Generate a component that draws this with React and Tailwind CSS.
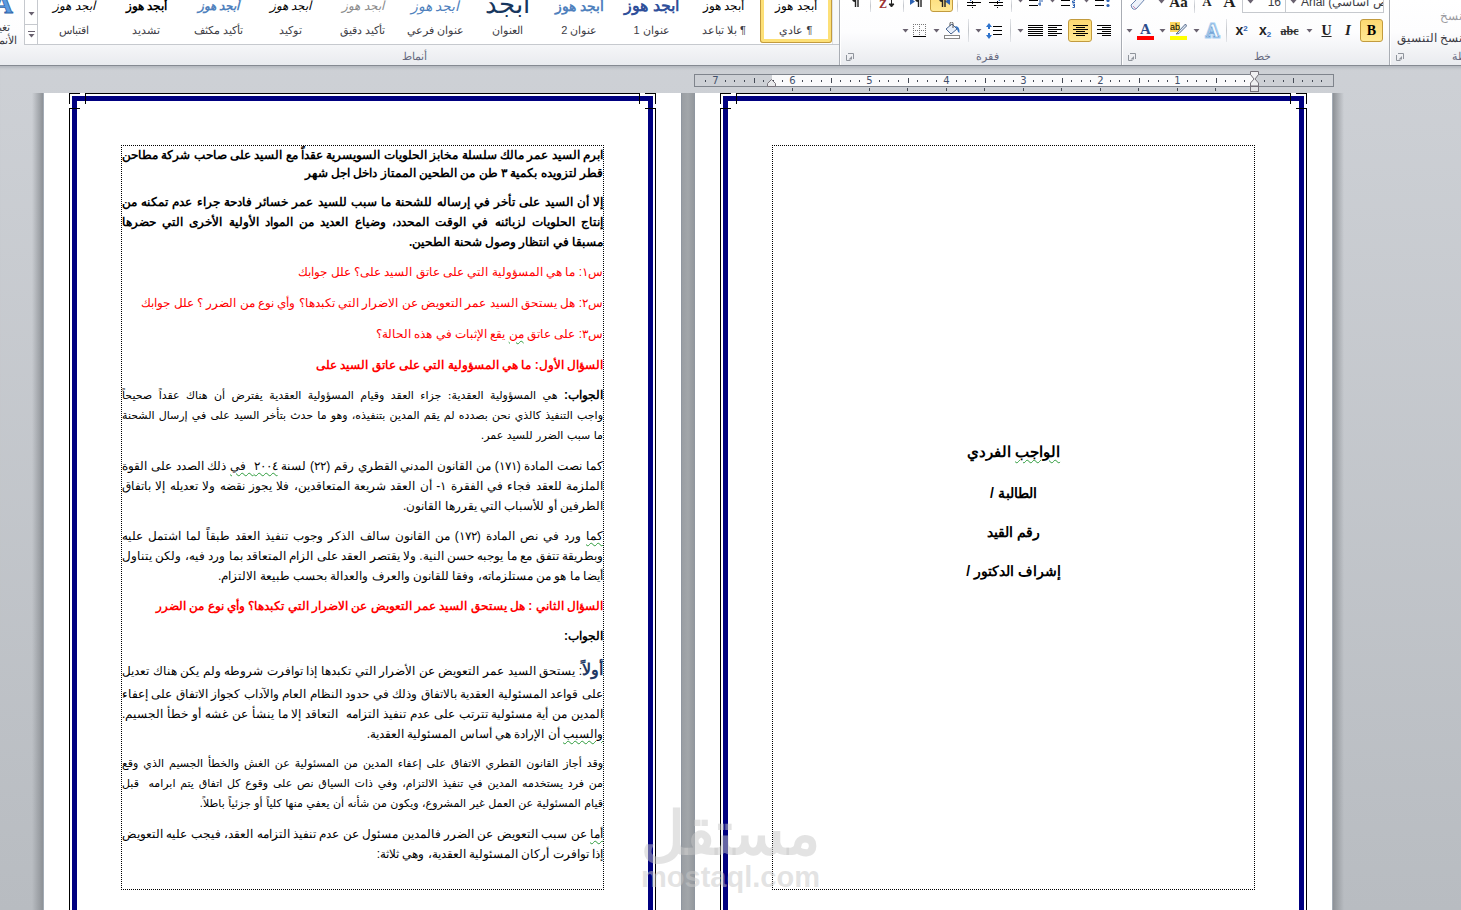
const STYLES = [
  { name: "اقتباس", sample: "italic text-black text-[12px]" },
  { name: "تشديد", sample: "font-bold text-black text-[12px]" },
  { name: "تأكيد مكثف", sample: "font-bold italic text-[#4f81bd] text-[12px]" },
  { name: "توكيد", sample: "italic text-black text-[12px]" },
  { name: "تأكيد دقيق", sample: "italic text-[#8a8a8a] text-[12px]" },
  { name: "عنوان فرعي", sample: "italic text-[#4f81bd] text-[14px]" },
  { name: "العنوان", sample: "text-[#17365d] text-[26px] pb-1", text: "أبجد" },
  { name: "عنوان 2", sample: "font-bold text-[#4f81bd] text-[14px]" },
  { name: "عنوان 1", sample: "font-bold text-[#2f4f9a] text-[16px]" },
  { name: "¶ بلا تباعد", sample: "text-black text-[12px]" },
  { name: "¶ عادي", sample: "text-black text-[12px]", selected: true },
];

const Wave = ({ children }) => (
  <span className="underline decoration-wavy decoration-[#2e9b3c] decoration-1 underline-offset-2">{children}</span>
);

const BODY = "leading-5";
const BODY_DENSE = "font-[DejaVu_Sans,sans-serif] text-[11px] leading-5";

const PARAGRAPHS = [
  {
    cls: "font-bold leading-[18px]",
    lines: [
      "ابرم السيد عمر مالك سلسلة مخابز الحلويات السويسرية عقداً مع السيد على صاحب شركة مطاحن",
      "قطر لتزويده بكمية ٣ طن من الطحين الممتاز داخل اجل شهر",
    ],
  },
  {
    cls: "font-bold leading-5",
    lines: [
      "إلا أن السيد على تأخر في إرساله للشحنة ما سبب للسيد عمر خسائر فادحة جراء عدم تمكنه من",
      "إنتاج الحلويات لزبائنه في الوقت المحدد، وضياع العديد من المواد الأولية الأخرى التي حضرها",
      "مسبقا في انتظار وصول شحنة الطحين.",
    ],
  },
  { cls: "text-[#ff0000] leading-[21px]", lines: ["س١: ما هي المسؤولية التي على عاتق السيد على؟ علل جوابك"] },
  {
    cls: "text-[#ff0000] leading-[21px]",
    lines: ["س٢: هل يستحق السيد عمر التعويض عن الاضرار التي تكبدها؟ وأي نوع من الضرر ؟ علل جوابك"],
  },
  {
    cls: "text-[#ff0000] leading-[21px]",
    lines: [<>س٣: على عاتق <Wave>من</Wave> يقع الإثبات في هذه الحالة؟</>],
  },
  { cls: "font-bold text-[#ff0000] leading-5", lines: ["السؤال الأول: ما هي المسؤولية التي على عاتق السيد على"] },
  {
    cls: BODY_DENSE,
    lines: [
      <><b className="font-['Liberation_Sans',sans-serif] text-[12px]">الجواب:</b> هي المسؤولية العقدية: جزاء العقد وقيام المسؤولية العقدية يفترض أن هناك عقداً صحيحاً</>,
      "واجب التنفيذ كالذي نحن بصدده لم يقم المدين بتنفيذه، وهو ما حدث بتأخر السيد على في إرسال الشحنة",
      "ما سبب الضرر للسيد عمر.",
    ],
  },
  {
    cls: BODY,
    lines: [
      <>كما نصت المادة (١٧١) من القانون المدني القطري رقم (٢٢) لسنة <Wave>٢٠٠٤ &nbsp;في</Wave> ذلك الصدد على القوة</>,
      "الملزمة للعقد فجاء في الفقرة ١- أن العقد شريعة المتعاقدين، فلا يجوز نقضه ولا تعديله إلا باتفاق",
      "الطرفين أو للأسباب التي يقررها القانون.",
    ],
  },
  {
    cls: BODY,
    lines: [
      <><Wave>كما</Wave> ورد في نص المادة (١٧٢) من القانون سالف الذكر وجوب تنفيذ العقد طبقاً لما اشتمل عليه</>,
      "وبطريقة تتفق مع ما يوجبه حسن النية. ولا يقتصر العقد على الزام المتعاقد بما ورد فيه، ولكن يتناول",
      "أيضا ما هو من مستلزماته، وفقا للقانون والعرف والعدالة بحسب طبيعة الالتزام.",
    ],
  },
  {
    cls: "font-bold text-[#ff0000] leading-5",
    lines: ["السؤال الثاني : هل يستحق السيد عمر التعويض عن الاضرار التي تكبدها؟ وأي نوع من الضرر"],
  },
  { cls: "font-bold leading-5", lines: ["الجواب:"] },
  {
    cls: BODY,
    lines: [
      <><b className="text-base leading-7 text-[#1f3864]">أولاً</b>: يستحق السيد عمر التعويض عن الأضرار التي تكبدها إذا توافرت شروطه ولم يكن هناك تعديل</>,
      "على قواعد المسئولية العقدية بالاتفاق وذلك في حدود النظام العام والآداب كجواز الاتفاق على إعفاء",
      <>المدين من أية مسئولية تترتب على عدم تنفيذ التزامه &nbsp;التعاقد إلا ما ينشأ عن غشه أو خطأ الجسيم.</>,
      <><Wave>والسبب</Wave> أن الإرادة هي أساس المسئولية العقدية.</>,
    ],
  },
  {
    cls: BODY_DENSE,
    lines: [
      "وقد أجاز القانون القطري الاتفاق على إعفاء المدين من المسئولية عن الغش والخطأ الجسيم الذي وقع",
      <>من فرد يستخدمه المدين في تنفيذ الالتزام، وفي ذات السياق نص على وقوع كل اتفاق يتم ابرامه &nbsp;قبل</>,
      "قيام المسئولية عن العمل غير المشروع، ويكون من شأنه أن يعفي منها كلياً أو جزئياً باطلاً.",
    ],
  },
  {
    cls: BODY,
    lines: [
      <><Wave>أما</Wave> عن سبب التعويض عن الضرر فالمدين مسئول عن عدم تنفيذ التزامه العقد، فيجب عليه التعويض</>,
      "إذا توافرت أركان المسئولية العقدية، وهي ثلاثة:",
    ],
  },
];

const Caret = () => (
  <svg width="7" height="4" viewBox="0 0 7 4" className="shrink-0" aria-hidden="true">
    <path d="M0.500 0h6L3.500 3.600z" fill="#6a6270" />
  </svg>
);

const Launcher = ({ label }) => (
  <button aria-label={label} className="flex h-2 w-2 items-center">
    <svg width="8" height="8" viewBox="0 0 8 8">
      <path d="M2 .5h5.500v5.500M0.500 2v5.500h4" fill="none" stroke="#8f949c" />
      <path d="M6 6.500H2.500L6 3z" fill="#8f949c" />
    </svg>
  </button>
);

const Sep = ({ w }) => (
  <span className={`flex shrink-0 justify-center self-stretch ${w}`}>
    <span className="w-px bg-linear-to-b from-[#e4e6ea] via-[#c3c6cb] to-[#e4e6ea]" />
  </span>
);

const Tool = ({ label, w, caret, selected, children }) => (
  <button
    aria-label={label}
    className={`flex h-[23px] shrink-0 items-center justify-center gap-1 ${w} ${
      selected ? "rounded-[3px] border border-[#c29b3e] bg-linear-to-b from-[#fcd871] to-[#ffe995]" : ""
    }`}
  >
    {caret && <Caret />}
    {children}
  </button>
);

const Lines = ({ rows }) => (
  <svg width="15" height="14" viewBox="0 0 15 14" aria-hidden="true">
    {rows.map(([x, w], i) => (
      <rect key={i} x={x} y={1 + i * 2} width={w} height="1" fill="#000" />
    ))}
  </svg>
);

const Pilcrow = ({ arrow }) => (
  <svg width="16" height="16" viewBox="0 0 16 16" aria-hidden="true">
    {arrow === "l" && <path d="M16 5v7l-5-3.500z" fill="#2d62b3" />}
    {arrow === "r" && <path d="M0 5v7l5-3.500z" fill="#2d62b3" />}
    <path d="M6 3h6M8.500 3v11M11 3v11" stroke="#222" fill="none" strokeWidth="1.400" />
    <path d="M8 3a3 3 0 0 0 0 6z" fill="#222" />
  </svg>
);

const Indent = ({ flip }) => (
  <svg width="16" height="14" viewBox="0 0 16 14" aria-hidden="true">
    <g transform={flip ? "translate(16 0) scale(-1 1)" : undefined}>
      <path d="M8 1.500h7M8 4.500h7M1 8.500h14M1 11.500h9" stroke="#000" />
      <path d="M1 4.500h6M4 2l3 2.500L4 7" stroke="#2d62b3" fill="none" />
      <path d="M6.500 5v9" stroke="#000" strokeDasharray="1 1" />
    </g>
  </svg>
);

const Bullets = ({ kind }) => (
  <svg width="17" height="15" viewBox="0 0 17 15" aria-hidden="true">
    <path d="M1 2.500h9M1 7.500h9M1 12.500h9" stroke="#000" />
    {kind === "dots" && (
      <g fill="#2d62b3">
        <circle cx="14" cy="2.500" r="1.600" />
        <circle cx="14" cy="7.500" r="1.600" />
        <circle cx="14" cy="12.500" r="1.600" />
      </g>
    )}
    {kind === "nums" && <path d="M14 0v4M12.500 6h2v2h-2v1.500h2.500M12.500 11h2v3.500h-2M14.500 12.500h-1.500" stroke="#2d62b3" fill="none" />}
    {kind === "multi" && <path d="M14 0v4M12 7v6M10 11h3M14 6v3" stroke="#2d62b3" fill="none" />}
  </svg>
);

const Group = ({ label, launcher, width, children }) => (
  <section
    dir="ltr"
    aria-label={label}
    className={`flex shrink-0 flex-col border-l border-[#a9adb4] shadow-[inset_1px_0_0_#fff] ${width}`}
  >
    {children}
    <footer className="mt-auto flex h-[17px] items-center pl-[6px]">
      <Launcher label={launcher} />
      <span className="flex-1 text-center text-[11px] text-[#666a80]">{label}</span>
    </footer>
  </section>
);

function Ribbon() {
  return (
    <header className="flex h-[66px] shrink-0 overflow-hidden border-b border-[#858a92] bg-linear-to-b from-white via-[#fdfdfe] to-[#e9ebef] text-[#3c3c44]">
      <section dir="ltr" aria-label="الحافظة" className="flex w-[72px] shrink-0 flex-col overflow-hidden border-l border-[#a9adb4] text-[12px] whitespace-nowrap shadow-[inset_1px_0_0_#fff]">
        <button className="flex h-[26px] items-end pl-[50px] leading-5 text-[#9a9aa0]">نسخ</button>
        <button className="flex h-[22px] items-end pl-[7px] leading-5">نسخ التنسيق</button>
        <footer className="mt-auto flex h-[17px] items-center gap-[48px] pl-[6px]">
          <Launcher label="خيارات الحافظة" />
          <span className="text-[11px] text-[#666a80]">الحافظة</span>
        </footer>
      </section>

      <Group label="خط" launcher="خيارات الخط" width="w-[268px]">
        <div className="flex h-[13px] items-end overflow-hidden">
          <Tool label="مسح التنسيق" w="w-[32px]">
            <svg width="18" height="16" viewBox="0 0 18 16"><path d="M1 9l8-8 6 2-8 9a3 3 0 0 1-5 0z" fill="#eef3fb" stroke="#6d86b0" transform="translate(1 2)" /><path d="M4 12l3 3" stroke="#c88bb5" /></svg>
          </Tool>
          <Tool label="تغيير حالة الأحرف" w="w-[38px]" caret>
            <span className="font-['Liberation_Serif'] text-[15px] leading-4 font-bold text-[#222]">Aa</span>
          </Tool>
          <Sep w="w-[5px]" />
          <Tool label="تصغير الخط" w="w-[20px]">
            <span className="font-['Liberation_Serif'] text-[13px] font-bold text-[#222]">A</span>
          </Tool>
          <Tool label="تكبير الخط" w="w-[25px]">
            <span className="font-['Liberation_Serif'] text-[17px] font-bold text-[#222]">A</span>
          </Tool>
          <button aria-label="حجم الخط" className="flex h-[23px] w-[44px] shrink-0 items-end justify-between border border-[#c6c9ce] bg-white px-1 pb-[2px] text-[12px] leading-4">
            <span className="pb-[6px]"><Caret /></span><span>16</span>
          </button>
          <button aria-label="نوع الخط" className="flex h-[23px] w-[98px] shrink-0 items-end gap-1 overflow-hidden border border-l-0 border-[#c6c9ce] bg-white px-1 pb-[2px] text-[12px] leading-4 whitespace-nowrap">
            <span className="pb-[6px]"><Caret /></span><span>Arial (نص أساسي)</span>
          </button>
        </div>
        <div className="mt-[6px] flex h-[23px] items-center pl-[2px]">
          <Tool label="لون الخط" w="w-[32px]" caret>
            <svg width="17" height="18" viewBox="0 0 17 18"><text x="8.500" y="12" textAnchor="middle" fontFamily="Liberation Serif" fontWeight="bold" fontSize="15" fill="#2b4c8c">A</text><rect y="14" width="17" height="4" fill="#f00" /></svg>
          </Tool>
          <Tool label="لون تمييز النص" w="w-[34px]" caret>
            <svg width="17" height="18" viewBox="0 0 17 18"><rect width="10" height="10" fill="#fbd65f" /><text x="0" y="8" fontFamily="Liberation Sans" fontSize="9" fill="#000">ab</text><path d="M15.500 2L8 10l-2 2 3-.5L16.500 4z" fill="#dfe8f5" stroke="#5b6f8f" /><rect y="14" width="17" height="4" fill="#ff0" /></svg>
          </Tool>
          <Tool label="تأثيرات النص" w="w-[33px]" caret>
            <svg width="17" height="18" viewBox="0 0 17 18"><text x="8.500" y="15" textAnchor="middle" fontFamily="Liberation Serif" fontWeight="bold" fontSize="18" fill="#fff" stroke="#a9d0f2" strokeWidth="3" paintOrder="stroke">A</text><text x="8.500" y="15" textAnchor="middle" fontFamily="Liberation Serif" fontWeight="bold" fontSize="18" fill="#f4f9fe" stroke="#5b95cf" strokeWidth="0.600">A</text></svg>
          </Tool>
          <Sep w="w-[7px]" />
          <Tool label="مرتفع" w="w-[23px]"><span className="text-[14px] font-bold text-[#222]">x<sup className="text-[8px] text-[#2d62b3]">2</sup></span></Tool>
          <Tool label="منخفض" w="w-[24px]"><span className="text-[14px] font-bold text-[#222]">x<sub className="text-[8px] text-[#2d62b3]">2</sub></span></Tool>
          <Tool label="يتوسطه خط" w="w-[25px]"><span className="font-['Liberation_Serif'] text-[12px] font-bold text-[#333] line-through">abc</span></Tool>
          <Tool label="تسطير" w="w-[34px]" caret><span className="pl-1 font-['Liberation_Serif'] text-[14px] font-bold text-[#222] underline">U</span></Tool>
          <Tool label="مائل" w="w-[24px]"><span className="font-['Liberation_Serif'] text-[15px] font-bold text-[#222] italic">I</span></Tool>
          <Tool label="غامق" w="w-[23px]" selected><span className="font-['Liberation_Serif'] text-[14px] font-bold text-black">B</span></Tool>
        </div>
      </Group>

      <Group label="فقرة" launcher="خيارات الفقرة" width="w-[282px]">
        <div className="flex h-[12px] items-end overflow-hidden pl-[2px]">
          <Tool label="إظهار علامات الفقرة" w="w-[26px]"><Pilcrow /></Tool>
          <Sep w="w-[5px]" />
          <Tool label="فرز" w="w-[28px]">
            <svg width="16" height="18" viewBox="0 0 16 18"><text x="0" y="16" fontFamily="Liberation Serif" fontWeight="bold" fontSize="12" fill="#9c3232">Z</text><path d="M12.500 2v12M10 12l2.500 3 2.500-3z" stroke="#222" fill="#222" /></svg>
          </Tool>
          <Sep w="w-[5px]" />
          <Tool label="من اليسار إلى اليمين" w="w-[24px]"><Pilcrow arrow="r" /></Tool>
          <Tool label="من اليمين إلى اليسار" w="w-[23px]" selected><Pilcrow arrow="l" /></Tool>
          <Sep w="w-[9px]" />
          <Tool label="زيادة المسافة البادئة" w="w-[23px]"><Indent /></Tool>
          <Tool label="إنقاص المسافة البادئة" w="w-[22px]"><Indent flip /></Tool>
          <Sep w="w-[9px]" />
          <Tool label="قائمة متعددة المستويات" w="w-[30px]" caret><Bullets kind="multi" /></Tool>
          <Tool label="ترقيم" w="w-[34px]" caret><Bullets kind="nums" /></Tool>
          <Tool label="تعداد نقطي" w="w-[34px]" caret><Bullets kind="dots" /></Tool>
        </div>
        <div className="mt-[7px] flex h-[23px] items-center pl-[58px]">
          <Tool label="حدود" w="w-[32px]" caret>
            <svg width="14" height="14" viewBox="0 0 14 14"><path d="M.5 0v13M6.500 0v13M12.500 0v13M0 .5h13M0 6.500h13" stroke="#777" strokeDasharray="1 1" /><path d="M0 12.500h13" stroke="#000" /></svg>
          </Tool>
          <Tool label="تظليل" w="w-[34px]" caret>
            <svg width="17" height="17" viewBox="0 0 17 17"><path d="M2 7l6-5 5 5-6 5z" fill="#e8effa" stroke="#4a6690" /><path d="M6 4V1.500a1.500 1.500 0 0 1 3 0V6" stroke="#555" fill="none" /><path d="M11 4q5 0 4.500 7q-2-1-2.500-4z" fill="#3574c4" /><rect x=".5" y="13.500" width="15" height="3" fill="#fff" stroke="#888" /></svg>
          </Tool>
          <Sep w="w-[9px]" />
          <Tool label="تباعد الأسطر" w="w-[30px]" caret>
            <svg width="16" height="16" viewBox="0 0 16 16"><path d="M7 3.500h9M7 7.500h9M7 11.500h9" stroke="#000" /><path d="M3 0l3 4H4v2H2V4H0zM3 16l3-4H4v-2H2v2H0z" fill="#2d72cc" /></svg>
          </Tool>
          <Sep w="w-[14px]" />
          <Tool label="ضبط" w="w-[26px]" caret><Lines rows={[[0, 15], [0, 15], [0, 15], [0, 15], [0, 15], [0, 15]]} /></Tool>
          <Tool label="محاذاة إلى اليسار" w="w-[25px]"><Lines rows={[[0, 14], [0, 9], [0, 14], [0, 9], [0, 14], [0, 9]]} /></Tool>
          <Tool label="توسيط" w="w-[24px]" selected><Lines rows={[[0, 15], [3, 9], [0, 15], [3, 9], [0, 15], [3, 9]]} /></Tool>
          <Tool label="محاذاة إلى اليمين" w="w-[24px]"><Lines rows={[[0, 14], [5, 9], [0, 14], [5, 9], [0, 14], [5, 9]]} /></Tool>
        </div>
      </Group>

      <section dir="ltr" aria-label="أنماط" className="flex min-w-0 flex-1 text-[11px]">
        <button dir="rtl" className="flex w-[24px] shrink-0 flex-col items-start justify-start overflow-hidden whitespace-nowrap">
          <svg width="24" height="21" viewBox="0 0 24 21" className="shrink-0" aria-hidden="true"><text x="13" y="13" textAnchor="start" fontFamily="Liberation Serif" fontWeight="bold" fontSize="28" fill="#5b9be0" stroke="#2e62a8" strokeWidth="0.800">A</text></svg>
          <span className="pr-[14px] leading-[13px]">تغيير</span>
          <span className="pr-[7px] leading-[13px]">الأنماط</span>
        </button>
        <div className="flex min-w-0 flex-1 flex-col">
          <div className="flex h-[45px] w-full items-end overflow-hidden border-b border-[#c6c9ce] bg-white">
            <div className="flex w-[14px] shrink-0 flex-col self-stretch border-x border-[#c6c9ce]">
              <button aria-label="التالي" className="flex h-[25px] items-center justify-center border-b border-[#c6c9ce] pt-1"><Caret /></button>
              <button aria-label="مزيد من الأنماط" className="flex flex-1 flex-col items-center justify-center gap-[2px]"><span className="h-px w-[7px] bg-[#6a6270]" /><Caret /></button>
            </div>
            {STYLES.map((s) => (
              <button
                key={s.name}
                className={`mb-px flex h-[52px] min-w-0 flex-1 flex-col items-center justify-end gap-1 pb-[3px] whitespace-nowrap ${
                  s.selected ? "rounded-b-[3px] shadow-[inset_0_0_0_1px_#c29b3e,inset_0_0_0_4px_#fde077]" : ""
                }`}
              >
                <span className={`flex h-[20px] items-center leading-[20px] ${s.sample}`}>{s.text ?? "أبجد هوز"}</span>
                <span dir="rtl" className="flex h-[20px] items-center text-[#3c3c44]">{s.name}</span>
              </button>
            ))}
            <span className="w-[7px] shrink-0 self-stretch border-l border-[#dfe1e5] bg-[#f8f9fa]" />
          </div>
          <span className="mt-auto flex h-[17px] items-center pl-[378px] text-[#666a80]">أنماط</span>
        </div>
      </section>
    </header>
  );
}

function Ruler() {
  const ticks = [];
  for (let i = -8; i <= 58; i++) {
    const x = 560 - i * 9.625;
    if (x < 2 || x > 634 || i === 0) continue;
    if (i > 0 && i % 8 === 0) ticks.push(<text key={i} x={x + 0.5} y="13" textAnchor="middle" fontSize="10" fill="#43506b">{i / 8}</text>);
    else if (i % 4 === 0) ticks.push(<rect key={i} x={Math.round(x)} y="7" width="1" height="5" fill="#444a55" />);
    else ticks.push(<rect key={i} x={Math.round(x)} y="9" width="1" height="2" fill="#444a55" />);
  }
  const tabs = [];
  for (let x = 521; x > 90; x -= 38.5) tabs.push(<rect key={x} x={Math.round(x)} y="17" width="1" height="3" fill="#444a55" />);
  return (
    <div className="flex shrink-0 justify-end pt-[2px]">
      <svg width="640" height="25" viewBox="0 -3 640 25" className="overflow-visible font-[DejaVu_Sans]" role="img" aria-label="المسطرة">
        <rect x=".5" y="3.500" width="639" height="12" fill="#cdd0d5" stroke="#7f848c" />
        <rect x="78" y="4" width="482" height="11" fill="#fafafb" />
        {ticks}
        {tabs}
        <path d="M73.500 15.500v-3l4-4 4 4v3z" fill="#e9eaec" stroke="#77727a" />
        <path d="M556.500.5h8v3l-3.500 4.500 3.500 4v3h-8v-3l3.500-4-3.500-4.500z" fill="#f0f0f2" stroke="#77727a" />
        <rect x="556.500" y="15.500" width="8" height="5" fill="#e2e2e5" stroke="#77727a" />
      </svg>
    </div>
  );
}

const Corner = ({ side }) => (
  <svg
    width="17"
    height="17"
    viewBox="0 0 17 17"
    aria-hidden="true"
    className={side === "left" ? "absolute -top-px -left-px" : "absolute -top-px -right-px -scale-x-100"}
  >
    <path d="M.5 11v5M11 .5h5" stroke="#fff" />
    <path d="M.5 11V.5H11M16.500 0v11M0 15.500h11" stroke="#000" fill="none" />
  </svg>
);

const Page = ({ label, children }) => (
  <article aria-label={label} className="flex w-[637px] shrink-0 bg-white px-[25px]">
    <div className="relative flex min-w-0 flex-1 border border-b-0 border-black p-[2px] pb-0">
      <Corner side="left" />
      <Corner side="right" />
      <div className="flex min-w-0 flex-1 border-5 border-b-0 border-[#000080] px-11 pt-11 pb-5">
        <div className="flex min-w-0 flex-1 flex-col border border-dotted border-black">{children}</div>
      </div>
    </div>
  </article>
);

export default function App() {
  return (
    <div dir="rtl" className="relative flex min-h-screen w-full flex-col overflow-hidden bg-linear-to-b from-[#cfd2d7] to-[#b8bcc1] font-['Liberation_Sans',sans-serif] text-black">
      <Ribbon />
      <div dir="ltr" className="flex flex-1 flex-col shadow-[inset_0_4px_3px_-2px_#b4b8be]">
        <div className="pr-[127px]"><Ruler /></div>
        <main className="flex flex-1 justify-end pr-[117px]">
          <span className="w-3 shrink-0 border-r border-[#a3abb5] bg-linear-to-r from-transparent to-[#8d9196]" />
          <Page label="الصفحة الثانية">
            <div dir="rtl" className="flex flex-col gap-[10px] text-[12px]">
              {PARAGRAPHS.map((p, i) => (
                <p key={i} className={p.cls}>
                  {p.lines.map((line, j) => (
                    <span
                      key={j}
                      className={`block whitespace-nowrap ${j < p.lines.length - 1 ? "text-justify [text-align-last:justify]" : ""}`}
                    >
                      {line}
                    </span>
                  ))}
                </p>
              ))}
            </div>
          </Page>
          <span className="w-[14px] shrink-0 border-x border-[#8f969f] bg-linear-to-r from-[#9a9ea3] via-[#a2a6aa] to-[#94989d]" />
          <Page label="الصفحة الأولى">
            <div dir="rtl" className="flex flex-1 flex-col items-center gap-[19px] pt-[294px] text-center text-[14px] leading-5 font-bold">
              <h1 className="text-[15px] leading-6"><Wave>الواجب</Wave> الفردي</h1>
              <p>الطالبة /</p>
              <p>رقم القيد</p>
              <p>إشراف الدكتور /</p>
            </div>
          </Page>
          <span className="w-3 shrink-0 border-l border-[#a3abb5] bg-linear-to-l from-transparent to-[#8d9196]" />
        </main>
      </div>
      <div className="pointer-events-none absolute inset-x-0 bottom-[18px] flex flex-col items-center font-bold text-[#c8c8c8]/50">
        <span className="text-[60px] leading-[56px]">مستقل</span>
        <span className="text-[29px] leading-[30px]">mostaql.com</span>
      </div>
    </div>
  );
}
